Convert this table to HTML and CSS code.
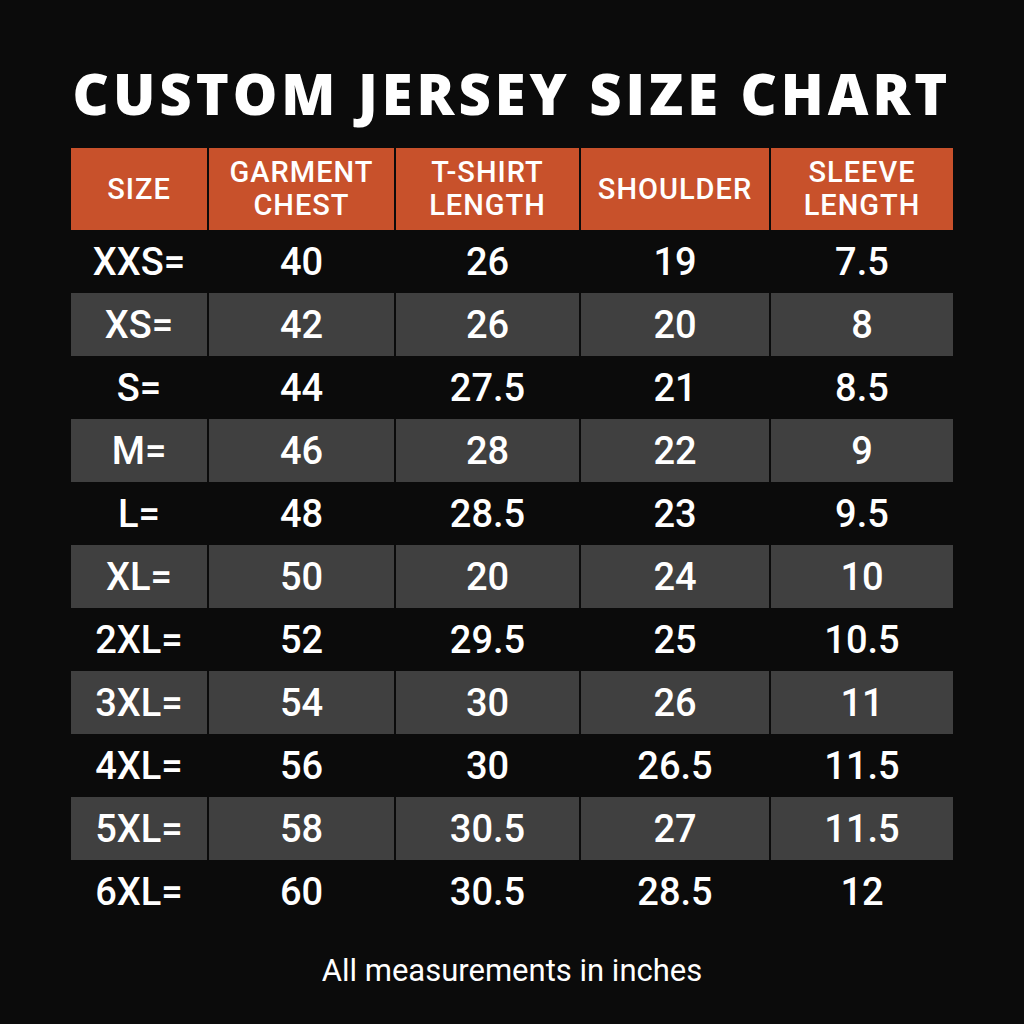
FILE: index.html
```html
<!DOCTYPE html>
<html>
<head>
<meta charset="utf-8">
<link rel="stylesheet" href="styles.css">
</head>
<body>
<div class="page">
  <h1 class="title">CUSTOM JERSEY SIZE CHART</h1>
  <div class="chart">
    <div class="row head">
      <div class="cell">SIZE</div>
      <div class="cell">GARMENT<br>CHEST</div>
      <div class="cell">T-SHIRT<br>LENGTH</div>
      <div class="cell">SHOULDER</div>
      <div class="cell">SLEEVE<br>LENGTH</div>
    </div>
    <div class="row"><div class="cell">XXS=</div><div class="cell">40</div><div class="cell">26</div><div class="cell">19</div><div class="cell">7.5</div></div>
    <div class="row alt"><div class="cell">XS=</div><div class="cell">42</div><div class="cell">26</div><div class="cell">20</div><div class="cell">8</div></div>
    <div class="row"><div class="cell">S=</div><div class="cell">44</div><div class="cell">27.5</div><div class="cell">21</div><div class="cell">8.5</div></div>
    <div class="row alt"><div class="cell">M=</div><div class="cell">46</div><div class="cell">28</div><div class="cell">22</div><div class="cell">9</div></div>
    <div class="row"><div class="cell">L=</div><div class="cell">48</div><div class="cell">28.5</div><div class="cell">23</div><div class="cell">9.5</div></div>
    <div class="row alt"><div class="cell">XL=</div><div class="cell">50</div><div class="cell">20</div><div class="cell">24</div><div class="cell">10</div></div>
    <div class="row"><div class="cell">2XL=</div><div class="cell">52</div><div class="cell">29.5</div><div class="cell">25</div><div class="cell">10.5</div></div>
    <div class="row alt"><div class="cell">3XL=</div><div class="cell">54</div><div class="cell">30</div><div class="cell">26</div><div class="cell">11</div></div>
    <div class="row"><div class="cell">4XL=</div><div class="cell">56</div><div class="cell">30</div><div class="cell">26.5</div><div class="cell">11.5</div></div>
    <div class="row alt"><div class="cell">5XL=</div><div class="cell">58</div><div class="cell">30.5</div><div class="cell">27</div><div class="cell">11.5</div></div>
    <div class="row"><div class="cell">6XL=</div><div class="cell">60</div><div class="cell">30.5</div><div class="cell">28.5</div><div class="cell">12</div></div>
  </div>
  <p class="note">All measurements in inches</p>
</div>
</body>
</html>
```

FILE: styles.css
```css
html, body {
  margin: 0;
  padding: 0;
  background: #0b0b0b;
}
.page {
  width: 1024px;
  height: 1024px;
  display: flex;
  flex-direction: column;
  align-items: center;
  color: #ffffff;
  font-family: Roboto, "Liberation Sans", sans-serif;
}
.title {
  margin: 60px 0 0 0;
  height: 66px;
  line-height: 66px;
  font-family: "Open Sans", "DejaVu Sans", sans-serif;
  font-weight: 800;
  font-size: 56px;
  letter-spacing: 4px;
  white-space: nowrap;
}
.chart {
  margin-top: 22px;
  width: 882px;
  display: flex;
  flex-direction: column;
}
.row {
  display: grid;
  grid-template-columns: 136px 185px 183px 188px 182px;
  column-gap: 2px;
  height: 63px;
}
.cell {
  display: flex;
  align-items: center;
  justify-content: center;
  text-align: center;
  font-size: 38px;
  font-weight: 500;
}
.row.alt .cell {
  background: #404040;
}
.row.head {
  height: 82px;
}
.row.head .cell {
  background: #c8512b;
  font-size: 29px;
  line-height: 33px;
  letter-spacing: 1px;
  font-weight: 500;
}
.note {
  margin: 29px 0 0 0;
  font-size: 31px;
  font-weight: 400;
}
```
